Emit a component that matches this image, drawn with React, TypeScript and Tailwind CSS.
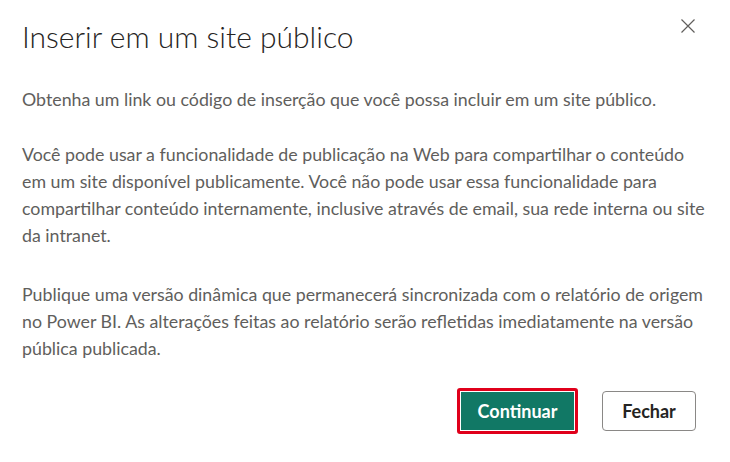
export default function App() {
  return (
    <div
      className="relative h-[462px] w-[730px] overflow-hidden bg-white text-[#252423]"
      style={{ fontFamily: 'Lato, "Open Sans", sans-serif' }}
    >
      {/* close */}
      <button className="absolute right-[34px] top-[18px] flex h-[16px] w-[16px] items-center justify-center text-[#605e5c]">
        <svg width="16" height="16" viewBox="0 0 16 16" fill="none" stroke="currentColor" strokeWidth="1.2">
          <path d="M1.5 1.5 L14.5 14.5 M14.5 1.5 L1.5 14.5" />
        </svg>
      </button>

      <div className="px-[22px] pt-[16px]">
        <h1 className="text-[30px] font-light leading-[40px] text-[#252423]">
          Inserir em um site público
        </h1>

        <div className="mt-[30px] whitespace-nowrap text-[17.8px] leading-[27px] text-[#605e5c]">
          <p>
            Obtenha um link ou código de inserção que você possa incluir em um site público.
          </p>
          <p className="mt-[28px]">
            Você pode usar a funcionalidade de publicação na Web para compartilhar o conteúdo
            <br />
            em um site disponível publicamente. Você não pode usar essa funcionalidade para
            <br />
            compartilhar conteúdo internamente, inclusive através de email, sua rede interna ou site
            <br />
            da intranet.
          </p>
          <p className="mt-[32px]">
            Publique uma versão dinâmica que permanecerá sincronizada com o relatório de origem
            <br />
            no Power BI. As alterações feitas ao relatório serão refletidas imediatamente na versão
            <br />
            pública publicada.
          </p>
        </div>
      </div>

      <div className="absolute right-[34px] top-[388px] flex items-center gap-[24px]">
        <div className="rounded-[3px] border-[3px] border-[#e0001b] p-[1px]">
          <button className="flex h-[38px] w-[113px] items-center justify-center bg-[#117865] text-[18px] font-bold text-white">
            Continuar
          </button>
        </div>
        <button className="flex h-[40px] w-[94px] items-center justify-center rounded-[4px] border border-[#8a8886] bg-white text-[18px] font-bold text-[#252423]">
          Fechar
        </button>
      </div>
    </div>
  );
}
